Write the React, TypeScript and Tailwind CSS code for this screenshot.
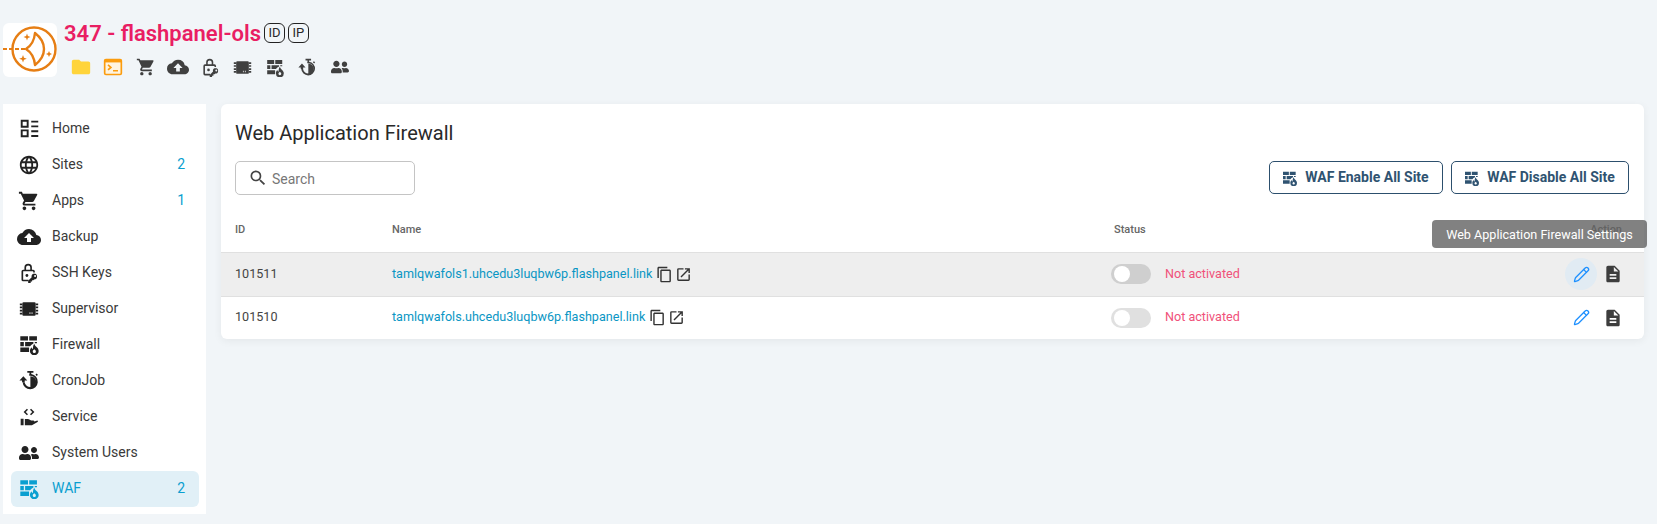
import type { ComponentType, ReactNode } from "react";
import { FaUserFriends } from "react-icons/fa";
import {
  MdCloudUpload,
  MdDescription,
  MdFolder,
  MdLanguage,
  MdOpenInNew,
  MdOutlineContentCopy,
  MdSearch,
  MdShoppingCart,
} from "react-icons/md";
import { Pencil } from "lucide-react";

type IconProps = { className?: string };

function Svg({ className, children }: IconProps & { children: ReactNode }) {
  return (
    <svg viewBox="0 0 24 24" fill="currentColor" className={className}>
      {children}
    </svg>
  );
}

function HomeIcon({ className }: IconProps) {
  return (
    <Svg className={className}>
      <path d="M2 2h9v9H2V2zm2.200 2.200v4.600h4.600V4.200H4.200zM2 13h9v9H2v-9zm2.200 2.200v4.600h4.600v-4.600H4.200z" />
      <path d="M14 3h8v2.200h-8zM14 8.500h8v2.200h-8zM14 14h8v2.200h-8zM14 19.500h8v2.200h-8z" />
    </Svg>
  );
}

function KeyLockIcon({ className }: IconProps) {
  return (
    <Svg className={className}>
      <path d="M11 1a4.500 4.500 0 0 0-4.500 4.500V8H5a2 2 0 0 0-2 2v10a2 2 0 0 0 2 2h6.500v-2H5V10h12v1.500h2V10a2 2 0 0 0-2-2h-1.500V5.500A4.500 4.500 0 0 0 11 1zM8.500 8V5.500a2.500 2.500 0 0 1 5 0V8h-5z" />
      <circle cx="9.500" cy="15" r="1.700" />
      <path d="M18.500 12.500a3.500 3.500 0 0 0-3.300 4.700L11 21.400V24h3v-1.700h1.700v-1.700h1.500l.9-.9a3.500 3.500 0 1 0-.1-7.200zm.8 2a1.200 1.200 0 1 1 0 2.400 1.200 1.200 0 0 1 0-2.400z" />
    </Svg>
  );
}

function ChipIcon({ className }: IconProps) {
  return (
    <Svg className={className}>
      <path d="M5.500 4h13A1.500 1.500 0 0 1 20 5.500v13a1.500 1.500 0 0 1-1.500 1.500h-13A1.500 1.500 0 0 1 4 18.500v-13A1.500 1.500 0 0 1 5.500 4z" />
      <path d="M1 5.500h3v2H1zM1 9h3v2H1zM1 13h3v2H1zM1 16.500h3v2H1zM20 5.500h3v2h-3zM20 9h3v2h-3zM20 13h3v2h-3zM20 16.500h3v2h-3z" />
      <path d="M12.500 16h1.300v2h-1.300zM15 16h1.300v2H15z" fill="#fff" opacity="0.7" />
    </Svg>
  );
}

function WallFireIcon({ className }: IconProps) {
  return (
    <Svg className={className}>
      <path d="M1.500 2.500h8.800v5H1.500zM11.700 2.500h8.800v5h-8.800zM1.500 9h4v5h-4zM7 9h9.500v1.800A8.600 8.600 0 0 0 12.600 14H7zM18 9h2.500v1.500H18zM1.500 15.500h10v5h-10z" />
      <path d="M17.500 11s.6 2.200 2.500 3.800c1.400 1.200 2.500 2.800 2.500 4.600a5 5 0 0 1-10 0c0-2 1-3.500 2-4.300 0 1.200.6 1.900 1.300 2 .4-2 .1-4.300 1.700-6.100zm0 6.500c-.9.800-1.800 1.500-1.800 2.500a1.800 1.800 0 0 0 3.600 0c0-1-.9-1.700-1.800-2.500z" />
    </Svg>
  );
}

function CronIcon({ className }: IconProps) {
  return (
    <Svg className={className}>
      <path d="M9.500 1h7v2H14v1.700A8.700 8.700 0 1 1 4.100 14h2.300a6.500 6.500 0 1 0 5.300-7.400V4.700c.1 0 .2-.1.300-.1V3H9.500V1z" />
      <path d="M13 7v13.500a6.700 6.700 0 0 0 0-13.500z" />
      <path d="M0.500 12 5 7l4.500 5H6.500v2h-3v-2z" />
      <path d="M20 4l1.600 1.500-1.200 1.300-1.600-1.500z" />
    </Svg>
  );
}

function ServiceIcon({ className }: IconProps) {
  return (
    <Svg className={className}>
      <path d="M9.500 2 5.500 6l4 4 1.300-1.300L8.100 6l2.700-2.700zM14.500 2l-1.300 1.300L15.900 6l-2.700 2.700L14.500 10l4-4z" />
      <path d="M2 14h3.500v8H2zM7 14.500h3.500c1 0 1.700.4 2.500.9l1.500.8h2.500a1.500 1.500 0 0 1 1.500 1.300l2.800-1.100c1.200-.4 2 .9 1 1.700L15.500 22H7z" />
    </Svg>
  );
}

function Logo() {
  return (
    <svg viewBox="0 0 54 54" className="h-[54px] w-[54px]" fill="none" stroke="#e67e14">
      <circle cx="31" cy="26" r="21.500" strokeWidth="2.400" />
      <path d="M0 26h25" strokeWidth="2.200" strokeDasharray="4 2" />
      <path
        d="M32 10q9 7 9 16t-9 16q-1-11-9-16q8-5 9-16z"
        strokeWidth="2.400"
        strokeLinejoin="round"
        fill="#fff"
      />
      <path
        d="M24 10.500l.9 2.600 2.600.9-2.600.9-.9 2.600-.9-2.600-2.600-.9 2.600-.9zM46 28l.9 2.100 2.100.9-2.100.9-.9 2.100-.9-2.100-2.100-.9 2.100-.9zM20 32l1 2.800 2.800 1-2.800 1-1 2.800-1-2.800-2.800-1 2.800-1z"
        fill="#e67e14"
        stroke="none"
      />
    </svg>
  );
}

function TerminalIcon({ className }: IconProps) {
  return (
    <svg viewBox="0 0 24 24" className={className} fill="none" stroke="#fb9c0e">
      <rect x="2" y="3" width="20" height="18" rx="1.500" strokeWidth="2" fill="#fff4e0" />
      <rect x="2" y="3" width="20" height="3.500" fill="#fb9c0e" strokeWidth="0" />
      <path d="M6 9.500l3.500 3-3.500 3M12 16.500h6" strokeWidth="2" />
    </svg>
  );
}

type NavItem = {
  label: string;
  Icon: ComponentType<IconProps>;
  size: string;
  count?: number;
  active?: boolean;
};

const nav: NavItem[] = [
  { label: "Home", Icon: HomeIcon, size: "h-[21px] w-[21px]" },
  { label: "Sites", Icon: MdLanguage, size: "h-[22px] w-[22px]", count: 2 },
  { label: "Apps", Icon: MdShoppingCart, size: "h-[22px] w-[22px]", count: 1 },
  { label: "Backup", Icon: MdCloudUpload, size: "h-[24px] w-[24px]" },
  { label: "SSH Keys", Icon: KeyLockIcon, size: "h-[20px] w-[20px]" },
  { label: "Supervisor", Icon: ChipIcon, size: "h-[20px] w-[20px]" },
  { label: "Firewall", Icon: WallFireIcon, size: "h-[21px] w-[21px]" },
  { label: "CronJob", Icon: CronIcon, size: "h-[21px] w-[21px]" },
  { label: "Service", Icon: ServiceIcon, size: "h-[20px] w-[20px]" },
  { label: "System Users", Icon: FaUserFriends, size: "h-[20px] w-[20px]" },
  { label: "WAF", Icon: WallFireIcon, size: "h-[21px] w-[21px]", count: 2, active: true },
];

const rows = [
  { id: "101511", name: "tamlqwafols1.uhcedu3luqbw6p.flashpanel.link", hover: true },
  { id: "101510", name: "tamlqwafols.uhcedu3luqbw6p.flashpanel.link", hover: false },
];

function WafButton({ label, width }: { label: string; width: string }) {
  return (
    <button
      className={`flex h-[33px] items-center justify-center gap-[7px] rounded-[5px] border border-[#2c4f6d] pr-[1px] text-[14px] font-bold text-[#2f5371] ${width}`}
    >
      <WallFireIcon className="h-4 w-4" />
      {label}
    </button>
  );
}

function Badge({ children }: { children: ReactNode }) {
  return (
    <span className="ml-[3px] flex h-[20px] w-[21px] items-center justify-center rounded-[6px] border border-[#222] text-[13px]">
      {children}
    </span>
  );
}

export default function App() {
  return (
    <div className="h-[524px] w-[1657px] overflow-hidden bg-[#f1f5f8] pl-[3px] font-['Roboto',sans-serif] text-[#292929]">
      <header className="flex h-[104px] pt-[23px]">
        <div className="h-[54px] w-[54px] rounded-md bg-white">
          <Logo />
        </div>
        <div className="ml-[7px]">
          <div className="flex h-[20px] items-center">
            <h1 className="text-[22px] font-semibold text-[#e91e63]">347 - flashpanel-ols</h1>
            <Badge>ID</Badge>
            <Badge>IP</Badge>
          </div>
          <div className="mt-[13px] flex items-center gap-[12.400px] pl-[7px] text-[#404040]">
            <span className="flex w-5 justify-center">
              <MdFolder className="h-[22px] w-[22px] shrink-0 text-[#ffd43b]" />
            </span>
            <span className="flex w-5 justify-center">
              <TerminalIcon className="h-[20px] w-[20px]" />
            </span>
            <span className="flex w-5 justify-center">
              <MdShoppingCart className="h-[20px] w-[20px]" />
            </span>
            <span className="flex w-5 justify-center">
              <MdCloudUpload className="h-[22px] w-[22px] shrink-0" />
            </span>
            <span className="flex w-5 justify-center">
              <KeyLockIcon className="h-[19px] w-[19px]" />
            </span>
            <span className="flex w-5 justify-center">
              <ChipIcon className="h-[19px] w-[19px]" />
            </span>
            <span className="flex w-5 justify-center">
              <WallFireIcon className="h-[19px] w-[19px]" />
            </span>
            <span className="flex w-5 justify-center">
              <CronIcon className="h-[19px] w-[19px]" />
            </span>
            <span className="flex w-5 justify-center">
              <FaUserFriends className="h-[18px] w-[18px]" />
            </span>
          </div>
        </div>
      </header>

      <div className="flex gap-[15px]">
        <aside className="h-[410px] w-[203px] bg-white pl-2 pr-[7px] pt-[7px]">
          {nav.map(({ label, Icon, size, count, active }) => (
            <div
              key={label}
              className={`flex h-[36px] items-center rounded-md pb-[1px] pl-[8px] pr-[14px] text-[14px] ${
                active ? "bg-[#e1f0f7] text-[#0a9fd0]" : "text-[#3a3a3a]"
              }`}
            >
              <span className={`flex w-5 justify-center ${active ? "text-[#0a9fd0]" : "text-[#222]"}`}>
                <Icon className={`shrink-0 ${size}`} />
              </span>
              <span className="ml-[13px] flex-1">{label}</span>
              {count && <span className="text-[#0a9fd0]">{count}</span>}
            </div>
          ))}
        </aside>

        <main className="relative h-[235px] w-[1423px] rounded-md bg-white shadow-[0_2px_8px_rgba(0,0,0,0.06)]">
          <h2 className="px-[14px] pt-[14.500px] text-[20px] leading-[28px] text-[#292929]">
            Web Application Firewall
          </h2>
          <div className="mt-[14.500px] flex items-start justify-between pl-[14px] pr-[15px]">
            <div className="flex h-[34px] w-[180px] items-center rounded-[5px] border border-[#c4c4c4] pl-[12px] text-[14px] text-[#777]">
              <MdSearch className="h-[20px] w-[20px] text-[#444]" />
              <span className="ml-[4px] pt-[2px]">Search</span>
            </div>
            <div className="flex gap-2">
              <WafButton label="WAF Enable All Site" width="w-[174px]" />
              <WafButton label="WAF Disable All Site" width="w-[178px]" />
            </div>
          </div>

          <div className="mt-[13px] grid h-[44px] grid-cols-[157px_719px_1fr_auto] items-center px-[14px] text-[11px] font-medium text-[#666]">
            <span>ID</span>
            <span>Name</span>
            <span className="pl-[3px]">Status</span>
            <span className="pr-[8px]">Action</span>
          </div>
          {rows.map((row) => (
            <div
              key={row.id}
              className={`grid h-[43.500px] grid-cols-[157px_719px_1fr_auto] items-center border-t border-[#e0e0e0] px-[14px] text-[12.600px] ${
                row.hover ? "bg-[#eeeeee]" : ""
              }`}
            >
              <span className="text-[#444]">{row.id}</span>
              <div className="flex items-center">
                <span className="text-[#0a96c4]">{row.name}</span>
                <MdOutlineContentCopy className="ml-[4px] h-[17px] w-[17px] text-[#333]" />
                <MdOpenInNew className="ml-[2px] h-[17px] w-[17px] text-[#333]" />
              </div>
              <div className="flex items-center">
                <div
                  className={`flex h-[20px] w-[40px] items-center rounded-full pl-[3px] ${
                    row.hover ? "bg-[#cfcfcf]" : "bg-[#e0e0e0]"
                  }`}
                >
                  <div className="h-[16px] w-[16px] rounded-full bg-white" />
                </div>
                <span className="ml-[14px] text-[#f0517a]">Not activated</span>
              </div>
              <div className="flex items-center pr-[5px]">
                <div
                  className={`mr-[1px] flex h-[32px] w-[32px] items-center justify-center rounded-full ${
                    row.hover ? "bg-[#e1ebf3]" : ""
                  }`}
                >
                  <Pencil className="h-[17px] w-[17px] text-[#1e90ff]" strokeWidth={1.800} />
                </div>
                <MdDescription className="ml-[5px] mr-[2px] h-[20px] w-[20px] text-[#3d3d3d]" />
              </div>
            </div>
          ))}

          <div className="absolute right-[-3px] top-[116px] flex h-[28px] w-[215px] items-center justify-center rounded bg-[#616161]/80 pt-[2px] text-[12.600px] text-white">
            Web Application Firewall Settings
          </div>
        </main>
      </div>
    </div>
  );
}
